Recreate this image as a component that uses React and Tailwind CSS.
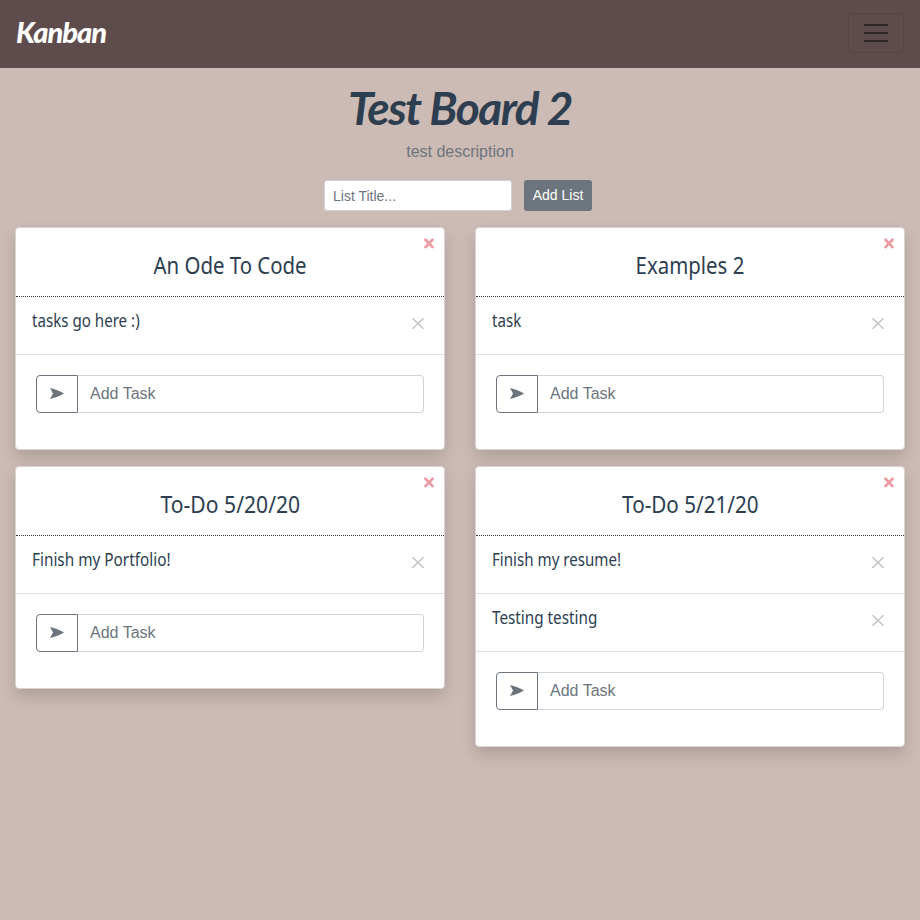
const lists = [
  { title: 'An Ode To Code', titleScale: 'scale-x-[0.85]', tasks: [{ text: 'tasks go here :)' }] },
  { title: 'Examples 2', titleScale: 'scale-x-[0.85]', tasks: [{ text: 'task' }] },
  {
    title: 'To-Do 5/20/20',
    titleScale: 'scale-x-[0.88]',
    tasks: [{ text: 'Finish my Portfolio!', textScale: 'scale-x-[0.852]' }],
  },
  {
    title: 'To-Do 5/21/20',
    titleScale: 'scale-x-[0.86]',
    tasks: [{ text: 'Finish my resume!' }, { text: 'Testing testing', textScale: 'scale-x-[0.848]' }],
  },
];

function Task({ text, textScale = 'scale-x-[0.84]' }) {
  return (
    <li className="flex h-[58px] items-start justify-between border-b border-[#dfdfdf] pl-4 pr-5 pt-[9px]">
      <span className={`${textScale} origin-left whitespace-nowrap font-['Noto_Sans',sans-serif] text-[18px] leading-7 text-[#2c3e50]`}>
        {text}
      </span>
      <button className="mt-[12px]" aria-label="Delete task">
        <svg width="12" height="11" viewBox="0 0 12 11" fill="none" stroke="#b7babd" strokeWidth="1.2">
          <path d="M.4.1l11.2 10.8M11.6.1L.4 10.9" />
        </svg>
      </button>
    </li>
  );
}

function List({ title, titleScale, tasks }) {
  return (
    <section className="rounded border border-[#d9d3d1] bg-white shadow-[0_8px_16px_rgba(0,0,0,0.15)]">
      <header className="relative flex h-[69px] items-center justify-center border-b border-dotted border-[#343a40] pt-[6px]">
        <h2 className={`${titleScale} whitespace-nowrap font-['Noto_Sans',sans-serif] text-[24px] leading-8 text-[#2c3e50]`}>
          {title}
        </h2>
        <button className="absolute right-[10px] top-[10px]" aria-label="Delete list">
          <svg width="10" height="11" viewBox="0 0 10 11" fill="none" stroke="#ee9aa2" strokeWidth="2.7">
            <path d="M1.5 1.7l7 7.4M8.5 1.7l-7 7.4" strokeLinecap="round" />
          </svg>
        </button>
      </header>
      <ul>
        {tasks.map((task) => (
          <Task key={task.text} {...task} />
        ))}
      </ul>
      <form className="flex px-5 pb-9 pt-5">
        <button
          type="button"
          aria-label="Add task"
          className="flex h-[38px] w-[42px] items-center justify-center rounded-l border border-[#6c757d]"
        >
          <svg className="-mt-px" width="14" height="11" viewBox="0 0 14 11" fill="#6c757d">
            <path d="M0 0C5 1.2 10 3.2 14 5.5 10 7.8 5 9.8 0 11L3 5.5z" />
          </svg>
        </button>
        <input
          placeholder="Add Task"
          className="h-[38px] min-w-0 flex-1 rounded-r border border-l-0 border-[#ced4da] bg-white px-3 text-base placeholder:text-[#6c757d]"
        />
      </form>
    </section>
  );
}

export default function App() {
  return (
    <div className="min-h-screen bg-[#ccbbb4] font-['Liberation_Sans',Arial,sans-serif]">
      <nav className="flex h-[68px] items-center justify-between bg-[#5e4c4c] px-4">
        <a className="-translate-y-0.5 whitespace-nowrap font-['Lato',sans-serif] text-[29px] font-black italic tracking-[-1px] text-white">
          Kanban
        </a>
        <button
          aria-label="Menu"
          className="-mt-[2px] flex h-10 w-14 flex-col items-center justify-center gap-[6px] rounded border border-[#554444]"
        >
          <span className="h-[2px] w-6 bg-[#2f2626]" />
          <span className="h-[2px] w-6 bg-[#2f2626]" />
          <span className="h-[2px] w-6 bg-[#2f2626]" />
        </button>
      </nav>
      <main className="px-[15px]">
        <h1 className="mt-2 flex h-[64px] items-center justify-center whitespace-nowrap pb-[2px] font-['Lato',sans-serif] text-[46px] font-bold italic tracking-[-1.5px] text-[#2c3e50]">
          Test Board 2
        </h1>
        <p className="text-center text-base text-[#6c757d]">test description</p>
        <form className="mr-1 mt-4 flex justify-center gap-3">
          <input
            placeholder="List Title..."
            className="h-[31px] w-[188px] rounded-[3px] border border-[#ced4da] bg-white px-2 text-[14px] placeholder:text-[#6c757d]"
          />
          <button type="button" className="h-[31px] w-[68px] whitespace-nowrap rounded-[3px] bg-[#6c757d] text-[14px] text-white">
            Add List
          </button>
        </form>
        <div className="mt-4 grid grid-cols-2 items-start gap-x-[30px] gap-y-4">
          {lists.map((list) => (
            <List key={list.title} {...list} />
          ))}
        </div>
      </main>
    </div>
  );
}
